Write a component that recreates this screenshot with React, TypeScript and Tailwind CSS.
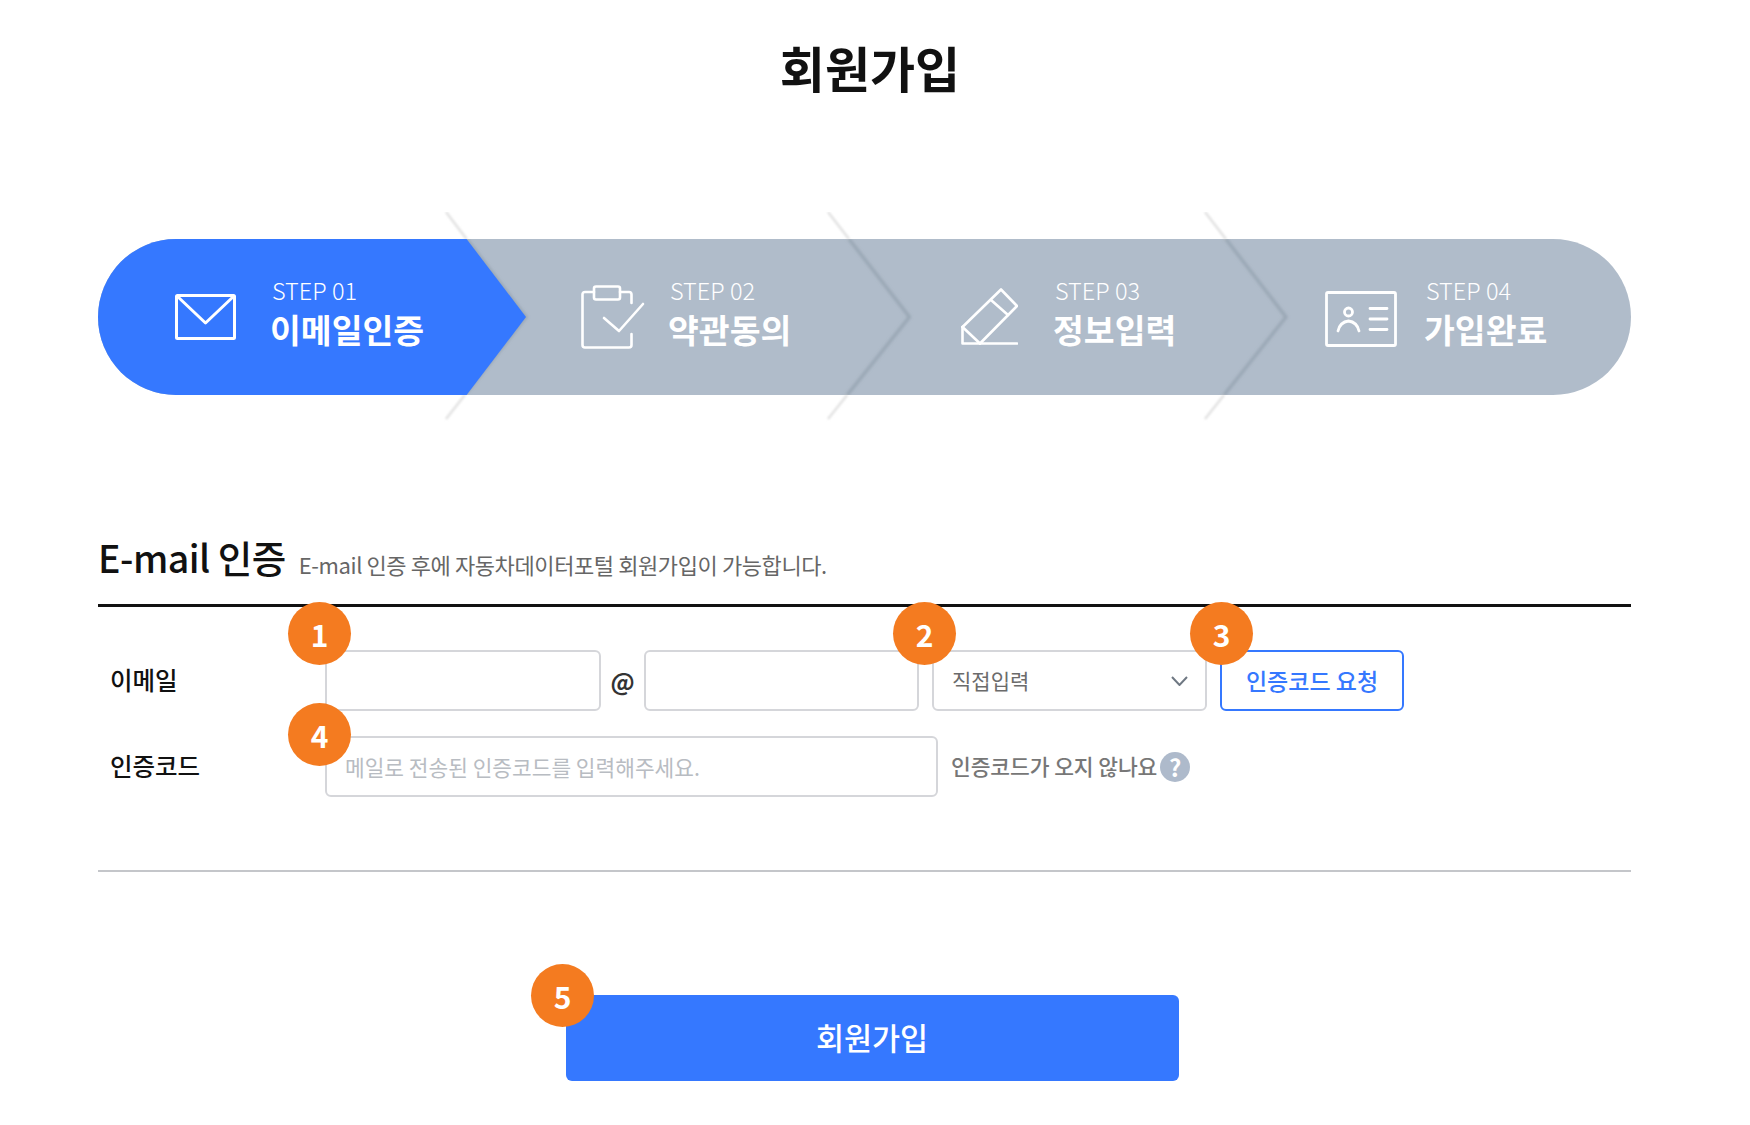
import React from "react";

function Badge({ n, className }: { n: number; className: string }) {
  return (
    <span className={"absolute z-10 flex h-[63px] w-[63px] items-center justify-center rounded-full bg-[#f47b20] text-[30px] font-bold leading-none text-white " + className}>
      {n}
    </span>
  );
}

function Chevrons() {
  const tips = [
    [348, 428],
    [730, 811.5],
    [1107, 1188],
  ];
  return (
    <svg className="absolute left-0 top-[-27px]" width="1533" height="210" viewBox="0 0 1533 210" fill="none">
      <defs>
        <filter id="blurA" x="-20%" y="-5%" width="140%" height="110%"><feGaussianBlur stdDeviation="1.800" /></filter>
        <filter id="blurB" x="-50%" y="-20%" width="200%" height="140%"><feGaussianBlur stdDeviation="0.8" /></filter>
        <clipPath id="barClip"><rect x="0" y="27" width="1533" height="156" rx="78" /></clipPath>
      </defs>
      {tips.map(([a, b], i) => {
        const top = a + ((b - a) * 27) / 105;
        const bot = a + ((b - a) * 24) / 102;
        return (
          <g key={i}>
            <line x1={a} y1="0" x2={top} y2="27" stroke="#e2e2e2" strokeWidth="2.500" filter="url(#blurB)" />
            <line x1={bot} y1="183" x2={a} y2="207" stroke="#e2e2e2" strokeWidth="2.500" filter="url(#blurB)" />
            <g clipPath="url(#barClip)">
              <polyline points={`${a},0 ${b},105 ${a},207`} stroke="#74818f" strokeOpacity="0.4" strokeWidth="3" filter="url(#blurA)" />
            </g>
          </g>
        );
      })}
      <path d="M78 27H368.6L428 105L368.6 183H78A78 78 0 0 1 78 27Z" fill="#3578ff" />
    </svg>
  );
}

const MailIcon = (
  <svg width="61" height="46" viewBox="0 0 61 46" fill="none" stroke="white" strokeWidth="3" strokeLinejoin="round" className="mt-[-1px] shrink-0">
    <rect x="1.5" y="1.5" width="58" height="43" rx="1" />
    <path d="M2 2L30.5 29L59 2" />
  </svg>
);
const ClipIcon = (
  <svg width="64" height="64" viewBox="0 0 64 64" fill="none" stroke="white" strokeWidth="2.6" strokeLinejoin="round" strokeLinecap="round" className="mt-[-1px] shrink-0">
    <path d="M13 7H4Q1.5 7 1.5 9.500V60Q1.500 62.500 4 62.500H48Q50.500 62.500 50.500 60V49" />
    <path d="M39 7H48Q50.500 7 50.500 9.500V18" />
    <rect x="13" y="1.500" width="26" height="13" rx="2" />
    <path d="M23 33L38 46L62 19" />
  </svg>
);
const PencilIcon = (
  <svg width="57" height="58" viewBox="0 0 57 58" fill="none" stroke="white" strokeWidth="2.6" strokeLinejoin="round" strokeLinecap="round" className="mt-[-1px] shrink-0">
    <path d="M1.500 39L40 1.500L56 18L19 55.500" />
    <path d="M30 12L47 27" />
    <path d="M1.500 39V55.500H56" />
    <path d="M1.500 39L19 55.500" />
  </svg>
);
const CardIcon = (
  <svg width="72" height="56" viewBox="0 0 72 56" fill="none" stroke="white" strokeWidth="2.800" strokeLinejoin="round" strokeLinecap="round" className="mt-[3px] shrink-0">
    <rect x="1.500" y="1.500" width="69" height="53" rx="1.500" />
    <circle cx="23.500" cy="21" r="4" />
    <path d="M13 40Q15 31 23.500 30Q32 31 34 40" />
    <path d="M45 17.500H62M45 28H62M45 38.500H62" />
  </svg>
);

const steps = [
  { no: "STEP 01", name: "이메일인증", icon: MailIcon, wrap: "w-[406px] gap-[34px]" },
  { no: "STEP 02", name: "약관동의", icon: ClipIcon, wrap: "w-[380px] gap-[23px]" },
  { no: "STEP 03", name: "정보입력", icon: PencilIcon, wrap: "w-[364px] gap-[35px]" },
  { no: "STEP 04", name: "가입완료", icon: CardIcon, wrap: "w-[300px] gap-[27px]" },
];

const field = "h-[61px] rounded-[6px] border-2 border-[#d5d6da] bg-white outline-none";

export default function App() {
  return (
    <div className="h-[1125px] w-[1750px] overflow-hidden bg-white font-['Noto_Sans_CJK_KR','Noto_Sans',sans-serif] text-[#111]">
      <h1 className="ml-[-10px] flex h-[132px] items-center justify-center text-[49px] font-bold leading-none text-[#111]">
        회원가입
      </h1>

      <div className="ml-[98px] mt-[107px] w-[1533px]">
        <div className="relative flex h-[156px] items-center rounded-full bg-[#b0bcca] pl-[77px]">
          <Chevrons />
          {steps.map((s) => (
            <div key={s.no} className={"relative flex items-center text-white " + s.wrap}>
              {s.icon}
              <div className="mb-[9px] flex flex-col">
                <span className="ml-[2px] text-[23.500px] font-light leading-[30px]">{s.no}</span>
                <span className="mt-[3px] text-[33.500px] font-bold leading-[42px]">{s.name}</span>
              </div>
            </div>
          ))}
        </div>

        <div className="mt-[135px] flex h-[77px] items-start border-b-[3px] border-[#111] pt-[2px]">
          <h2 className="text-[37.500px] font-medium leading-[50px] tracking-[-0.5px]">E-mail 인증</h2>
          <p className="ml-[13px] mt-[15px] text-[22px] leading-[34px] tracking-[-0.4px] text-[#666]">
            E-mail 인증 후에 자동차데이터포털 회원가입이 가능합니다.
          </p>
        </div>

        <div className="mt-[43px] flex items-center">
          <span className="ml-[12px] w-[215px] text-[24.500px] font-medium">이메일</span>
          <div className="relative">
            <Badge n={1} className="left-[-37px] top-[-48px]" />
            <input className={field + " block w-[276px]"} />
          </div>
          <span className="w-[43px] pt-[1px] text-center text-[24px] font-semibold text-[#333]">@</span>
          <input className={field + " w-[275px]"} />
          <div className={field + " relative ml-[13px] flex w-[275px] items-center justify-between pl-[18px] pr-[17px] text-[21px] text-[#6b6b6b]"}>
            <Badge n={2} className="left-[-41px] top-[-50px]" />
            직접입력
            <svg width="17" height="10" viewBox="0 0 17 10" fill="none" stroke="#6f7883" strokeWidth="2"><path d="M1 1L8.500 9L16 1" /></svg>
          </div>
          <div className="relative ml-[13px]">
            <Badge n={3} className="left-[-30px] top-[-48px]" />
            <button className="block h-[61px] w-[184px] rounded-[6px] border-2 border-[#3578ff] bg-white text-[23px] font-medium text-[#3578ff]">
              인증코드 요청
            </button>
          </div>
        </div>

        <div className="mt-[25px] flex items-center">
          <span className="ml-[12px] w-[215px] text-[24.500px] font-medium">인증코드</span>
          <div className="relative">
            <Badge n={4} className="left-[-37px] top-[-33px]" />
            <input
              className={field + " block w-[613px] pl-[18px] text-[21.400px] placeholder:text-[#b8bcc2]"}
              placeholder="메일로 전송된 인증코드를 입력해주세요."
            />
          </div>
          <span className="ml-[13px] text-[21.500px] font-medium tracking-[-0.1px] text-[#777]">인증코드가 오지 않나요</span>
          <span className="ml-[3px] flex h-[30px] w-[30px] items-center justify-center rounded-full bg-[#aebacb] text-[24px] font-bold leading-none text-white">?</span>
        </div>

        <div className="mt-[73px] h-[2px] bg-[#c4c6ca]" />

        <div className="relative ml-[467.500px] mt-[123px] w-[613px]">
          <Badge n={5} className="left-[-34.500px] top-[-31px]" />
          <button className="block h-[86px] w-full rounded-[6px] bg-[#3578ff] text-[30.500px] font-medium text-white">
            회원가입
          </button>
        </div>
      </div>
    </div>
  );
}
